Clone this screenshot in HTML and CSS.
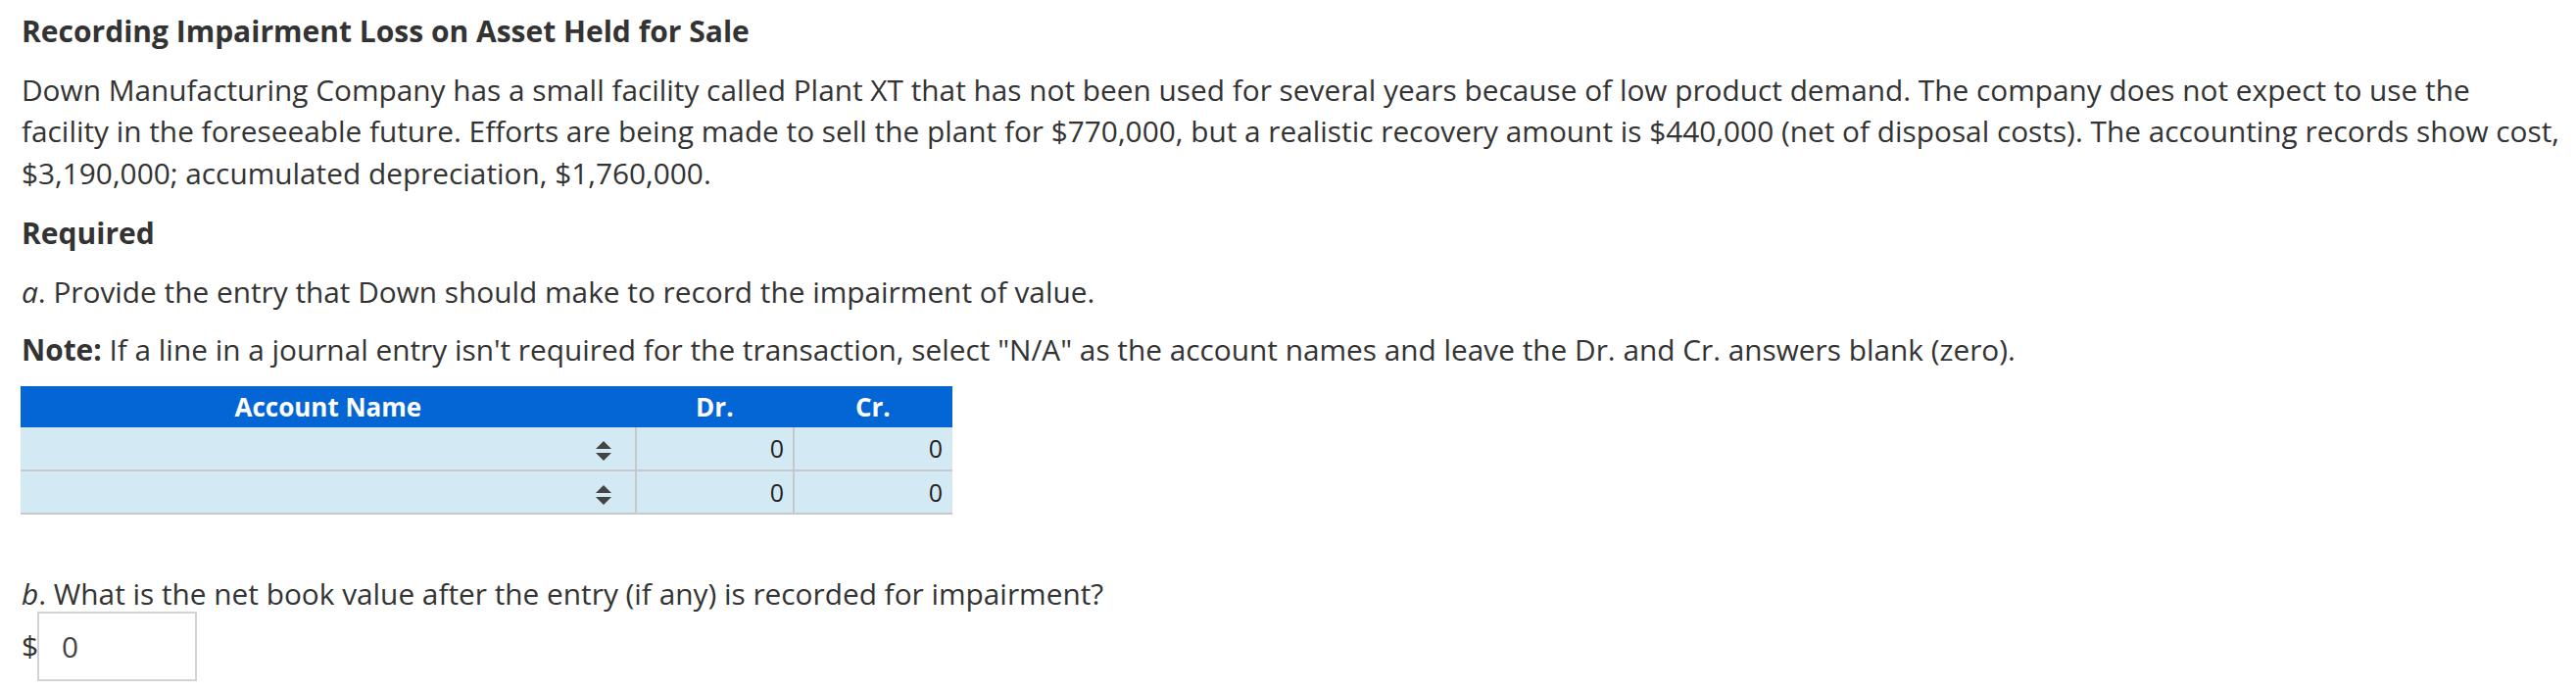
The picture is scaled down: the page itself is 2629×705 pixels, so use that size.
FILE: index.html
```html
<!DOCTYPE html>
<html>
<head>
<meta charset="utf-8">
<link rel="stylesheet" href="styles.css">
</head>
<body>
<div class="page">
  <h1 class="title">Recording Impairment Loss on Asset Held for Sale</h1>
  <p class="para">Down Manufacturing Company has a small facility called Plant XT that has not been used for several years because of low product demand. The company does not expect to use the<br>facility in the foreseeable future. Efforts are being made to sell the plant for $770,000, but a realistic recovery amount is $440,000 (net of disposal costs). The accounting records show cost, $3,190,000; accumulated depreciation, $1,760,000.</p>
  <h2 class="req">Required</h2>
  <p class="para"><i>a</i>. Provide the entry that Down should make to record the impairment of value.</p>
  <p class="para"><b class="note">Note:</b> If a line in a journal entry isn't required for the transaction, select "N/A" as the account names and leave the Dr. and Cr. answers blank (zero).</p>
  <table class="journal">
    <thead>
      <tr>
        <th class="col-acct">Account Name</th>
        <th class="col-num">Dr.</th>
        <th class="col-num">Cr.</th>
      </tr>
    </thead>
    <tbody>
      <tr>
        <td class="acct"><span class="sel"><svg width="18" height="20" viewBox="0 0 18 20"><path d="M9 0 L17 8 L1 8 Z M1 12 L17 12 L9 20 Z" fill="#444"/></svg></span></td>
        <td class="num">0</td>
        <td class="num last">0</td>
      </tr>
      <tr>
        <td class="acct"><span class="sel"><svg width="18" height="20" viewBox="0 0 18 20"><path d="M9 0 L17 8 L1 8 Z M1 12 L17 12 L9 20 Z" fill="#444"/></svg></span></td>
        <td class="num">0</td>
        <td class="num last">0</td>
      </tr>
    </tbody>
  </table>
  <p class="para partb"><i>b</i>. What is the net book value after the entry (if any) is recorded for impairment?</p>
  <div class="answer">
    <span class="dollar">$</span>
    <span class="box">0</span>
  </div>
</div>
</body>
</html>
```

FILE: styles.css
```css
html, body {
  margin: 0;
  padding: 0;
  background: #ffffff;
}
.page {
  padding: 11px 0 0 22px;
  font-family: "Open Sans", "Noto Sans", sans-serif;
  font-size: 29.8px;
  line-height: 42.7px;
  color: #333333;
}
.title {
  margin: 0;
  font-size: 30px;
  font-weight: 700;
  line-height: 42.7px;
}
.para {
  margin: 17px 0 0 0;
}
.req {
  margin: 18px 0 0 0;
  font-size: 30px;
  font-weight: 700;
  line-height: 42.7px;
}
.note {
  font-weight: 700;
}
.journal {
  margin-top: 15px;
  border-collapse: collapse;
  width: 951px;
  margin-left: -1px;
}
.journal th {
  background: #0466d5;
  color: #ffffff;
  font-size: 26px;
  font-weight: 700;
  height: 42px;
  padding: 0;
  line-height: 42px;
  text-align: center;
}
.col-acct {
  width: 626px;
}
.col-num {
  width: 161px;
}
.journal td {
  background: #d3e9f3;
  height: 42px;
  padding: 0;
  border-bottom: 2px solid #c6c9cb;
  border-right: 2px solid #c6c9cb;
  font-size: 25px;
  color: #222222;
}
.journal td.last {
  border-right: 1px solid #dfe3e5;
}
.acct {
  text-align: right;
}
.sel {
  display: inline-flex;
  vertical-align: middle;
  margin-right: 23px;
}
.num {
  text-align: right;
  padding-right: 9px !important;
}
.partb {
  margin-top: 60px;
}
.answer {
  display: flex;
  align-items: center;
  margin-top: -4px;
}
.dollar {
  width: 16px;
  font-size: 30px;
}
.box {
  box-sizing: border-box;
  width: 163px;
  height: 71px;
  border: 2px solid #d3d3d6;
  padding-left: 23px;
  line-height: 67px;
  color: #444444;
}
```
